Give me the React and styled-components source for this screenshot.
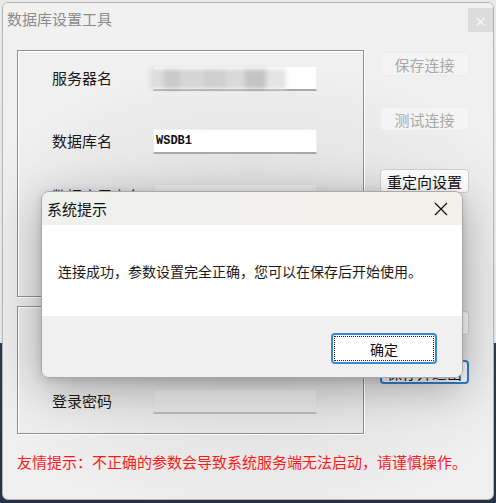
import React from "react";
import styled, { createGlobalStyle } from "styled-components";

const GlobalStyle = createGlobalStyle`
  html, body {
    margin: 0;
    padding: 0;
  }
  body {
    width: 496px;
    height: 503px;
    overflow: hidden;
    background: linear-gradient(to bottom, #eaeaea 0, #e4e4e4 343px, #2a3850 343px, #26324a 100%);
    font-family: "Noto Sans CJK SC", "Noto Sans", sans-serif;
  }
  * {
    box-sizing: border-box;
  }
`;

const cjk = `"Noto Sans CJK SC", "Noto Sans", sans-serif`;

const Window = styled.div`
  position: relative;
  margin: 2px 0 0 2px;
  width: 492px;
  height: 498px;
  border: 1px solid #b4b4b4;
  border-radius: 6px;
  background: radial-gradient(ellipse 320px 230px at 250px 290px, #cbcbcb 0%, #e4e4e4 60%, #f0f0f0 100%);
  overflow: hidden;
  font-family: ${cjk};
`;

const TitleBar = styled.div`
  height: 30px;
  display: flex;
  align-items: center;
  justify-content: space-between;
  padding: 0 0 0 4px;
  background: #f1f1f1;
`;

const WindowTitle = styled.span`
  font-size: 15px;
  color: #8c8c8c;
`;

const WindowClose = styled.div`
  width: 25px;
  height: 24px;
  margin-top: 4px;
  background: #dcdcdc;
  color: #ffffff;
  font-size: 13px;
  display: flex;
  align-items: center;
  justify-content: center;
`;

const Body = styled.div`
  padding: 17px 14px 0 14px;
`;

const Columns = styled.div`
  display: grid;
  grid-template-columns: 347px 89px;
  column-gap: 16px;
`;

const LeftCol = styled.div`
  display: flex;
  flex-direction: column;
  gap: 9px;
`;

const Group = styled.div`
  height: ${(p) => p.$h}px;
  border: 1px solid #8f8f8f;
  box-shadow: inset 1px 1px 0 #ffffff, 1px 1px 0 #ffffff;
  padding-left: 34px;
  display: flex;
  flex-direction: column;
`;

const Row = styled.div`
  display: flex;
  align-items: center;
  height: 25px;
  margin-top: ${(p) => p.$mt}px;
`;

const Label = styled.span`
  width: 101px;
  font-size: 15px;
  color: #1a1a1a;
  margin-top: -3px;
  white-space: nowrap;
`;

const Input = styled.div`
  position: relative;
  width: 164px;
  height: 25px;
  background: ${(p) => (p.$disabled ? "linear-gradient(#e9e9e9, #e2e2e2)" : "#ffffff")};
  border: 1px solid ${(p) => (p.$disabled ? "#dedede" : "#f0f0f0")};
  border-bottom: 2px solid ${(p) => (p.$disabled ? "#b9b9b9" : "#a9a9a9")};
  display: flex;
  align-items: center;
  padding-left: 2px;
  font-family: "Liberation Mono", "DejaVu Sans Mono", monospace;
  font-size: 12px;
  font-weight: bold;
  color: #111;
`;

const Blurred = styled.span`
  position: absolute;
  left: -4px;
  top: 2px;
  width: 136px;
  height: 20px;
  background: linear-gradient(
    to right,
    #dcdcdc 0 10%,
    #c9c9c9 10% 22%,
    #d6d6d6 22% 40%,
    #cfcfcf 40% 55%,
    #d9d9d9 55% 70%,
    #c4c4c4 70% 85%,
    #e4e4e4 85% 100%
  );
  filter: blur(2px);
`;

const RightCol = styled.div`
  display: flex;
  flex-direction: column;
  padding-top: 2px;
`;

const SideButton = styled.div`
  height: 24px;
  margin-top: ${(p) => p.$mt}px;
  border-radius: 4px;
  display: flex;
  align-items: center;
  justify-content: center;
  font-size: 15px;
  white-space: nowrap;
  background: ${(p) => (p.$disabled ? "#f4f4f4" : "#fdfdfd")};
  color: ${(p) => (p.$disabled ? "#a9a9a9" : "#111")};
  border: ${(p) =>
    p.$focus ? "2px solid #2f7fd0" : p.$disabled ? "1px solid #ececec" : "1px solid #cfcfcf"};
`;

const Notice = styled.div`
  margin-top: 17px;
  font-size: 15px;
  color: #ff1a1a;
  white-space: nowrap;
`;

const Dialog = styled.div`
  position: absolute;
  left: 38px;
  top: 188px;
  width: 422px;
  height: 187px;
  border: 1px solid #a8a8a8;
  border-radius: 8px;
  overflow: hidden;
  box-shadow: 0 10px 40px rgba(0, 0, 0, 0.28), 0 2px 8px rgba(0, 0, 0, 0.12);
  display: flex;
  flex-direction: column;
  font-family: ${cjk};
`;

const DialogTitle = styled.div`
  height: 33px;
  flex: none;
  display: flex;
  align-items: center;
  justify-content: space-between;
  padding: 0 14px 0 5px;
  background: linear-gradient(to right, #eff1ef, #f4f0ea);
  font-size: 15px;
  color: #111;
`;

const DialogContent = styled.div`
  height: 91px;
  flex: none;
  background: #ffffff;
  display: flex;
  align-items: center;
  padding: 0 0 0 16px;
  font-size: 14px;
  color: #1a1a1a;
  white-space: nowrap;
`;

const DialogFooter = styled.div`
  flex: 1;
  background: #f0f0f0;
  display: flex;
  justify-content: flex-end;
  align-items: flex-start;
  padding: 17px 25px 0 0;
`;

const OkButton = styled.div`
  width: 106px;
  height: 31px;
  border: 2px solid #3a88d4;
  border-radius: 4px;
  background: #ffffff;
  padding: 1px;
  div {
    width: 100%;
    height: 100%;
    border: 1px dotted #222;
    display: flex;
    align-items: center;
    justify-content: center;
    font-size: 14px;
    color: #111;
  }
`;

const CloseIcon = () => (
  <svg width="14" height="14" viewBox="0 0 14 14">
    <path d="M1 1L13 13M13 1L1 13" stroke="#111" strokeWidth="1.2" fill="none" />
  </svg>
);

export default function App() {
  return (
    <>
      <GlobalStyle />
      <Window>
        <TitleBar>
          <WindowTitle>数据库设置工具</WindowTitle>
          <WindowClose>×</WindowClose>
        </TitleBar>
        <Body>
          <Columns>
            <LeftCol>
              <Group $h={247}>
                <Row $mt={15}>
                  <Label>服务器名</Label>
                  <Input>
                    <Blurred />
                  </Input>
                </Row>
                <Row $mt={38}>
                  <Label>数据库名</Label>
                  <Input>WSDB1</Input>
                </Row>
                <Row $mt={30}>
                  <Label>数据库用户名</Label>
                  <Input $disabled />
                </Row>
                {/* row hidden under the message box */}
                <Row $mt={34}>
                  <Label />
                  <Input $disabled />
                </Row>
              </Group>
              <Group $h={128}>
                <Row $mt={25}>
                  <Label />
                  <Input $disabled />
                </Row>
                <Row $mt={32}>
                  <Label>登录密码</Label>
                  <Input $disabled />
                </Row>
              </Group>
            </LeftCol>
            <RightCol>
              <SideButton $mt={0} $disabled>保存连接</SideButton>
              <SideButton $mt={31} $disabled>测试连接</SideButton>
              <SideButton $mt={38}>重定向设置</SideButton>
              <SideButton $mt={118} />
              <SideButton $mt={25} $focus>保存并退出</SideButton>
            </RightCol>
          </Columns>
          <Notice>友情提示：不正确的参数会导致系统服务端无法启动，请谨慎操作。</Notice>
        </Body>
        <Dialog>
          <DialogTitle>
            <span>系统提示</span>
            <CloseIcon />
          </DialogTitle>
          <DialogContent>连接成功，参数设置完全正确，您可以在保存后开始使用。</DialogContent>
          <DialogFooter>
            <OkButton>
              <div>确定</div>
            </OkButton>
          </DialogFooter>
        </Dialog>
      </Window>
    </>
  );
}
